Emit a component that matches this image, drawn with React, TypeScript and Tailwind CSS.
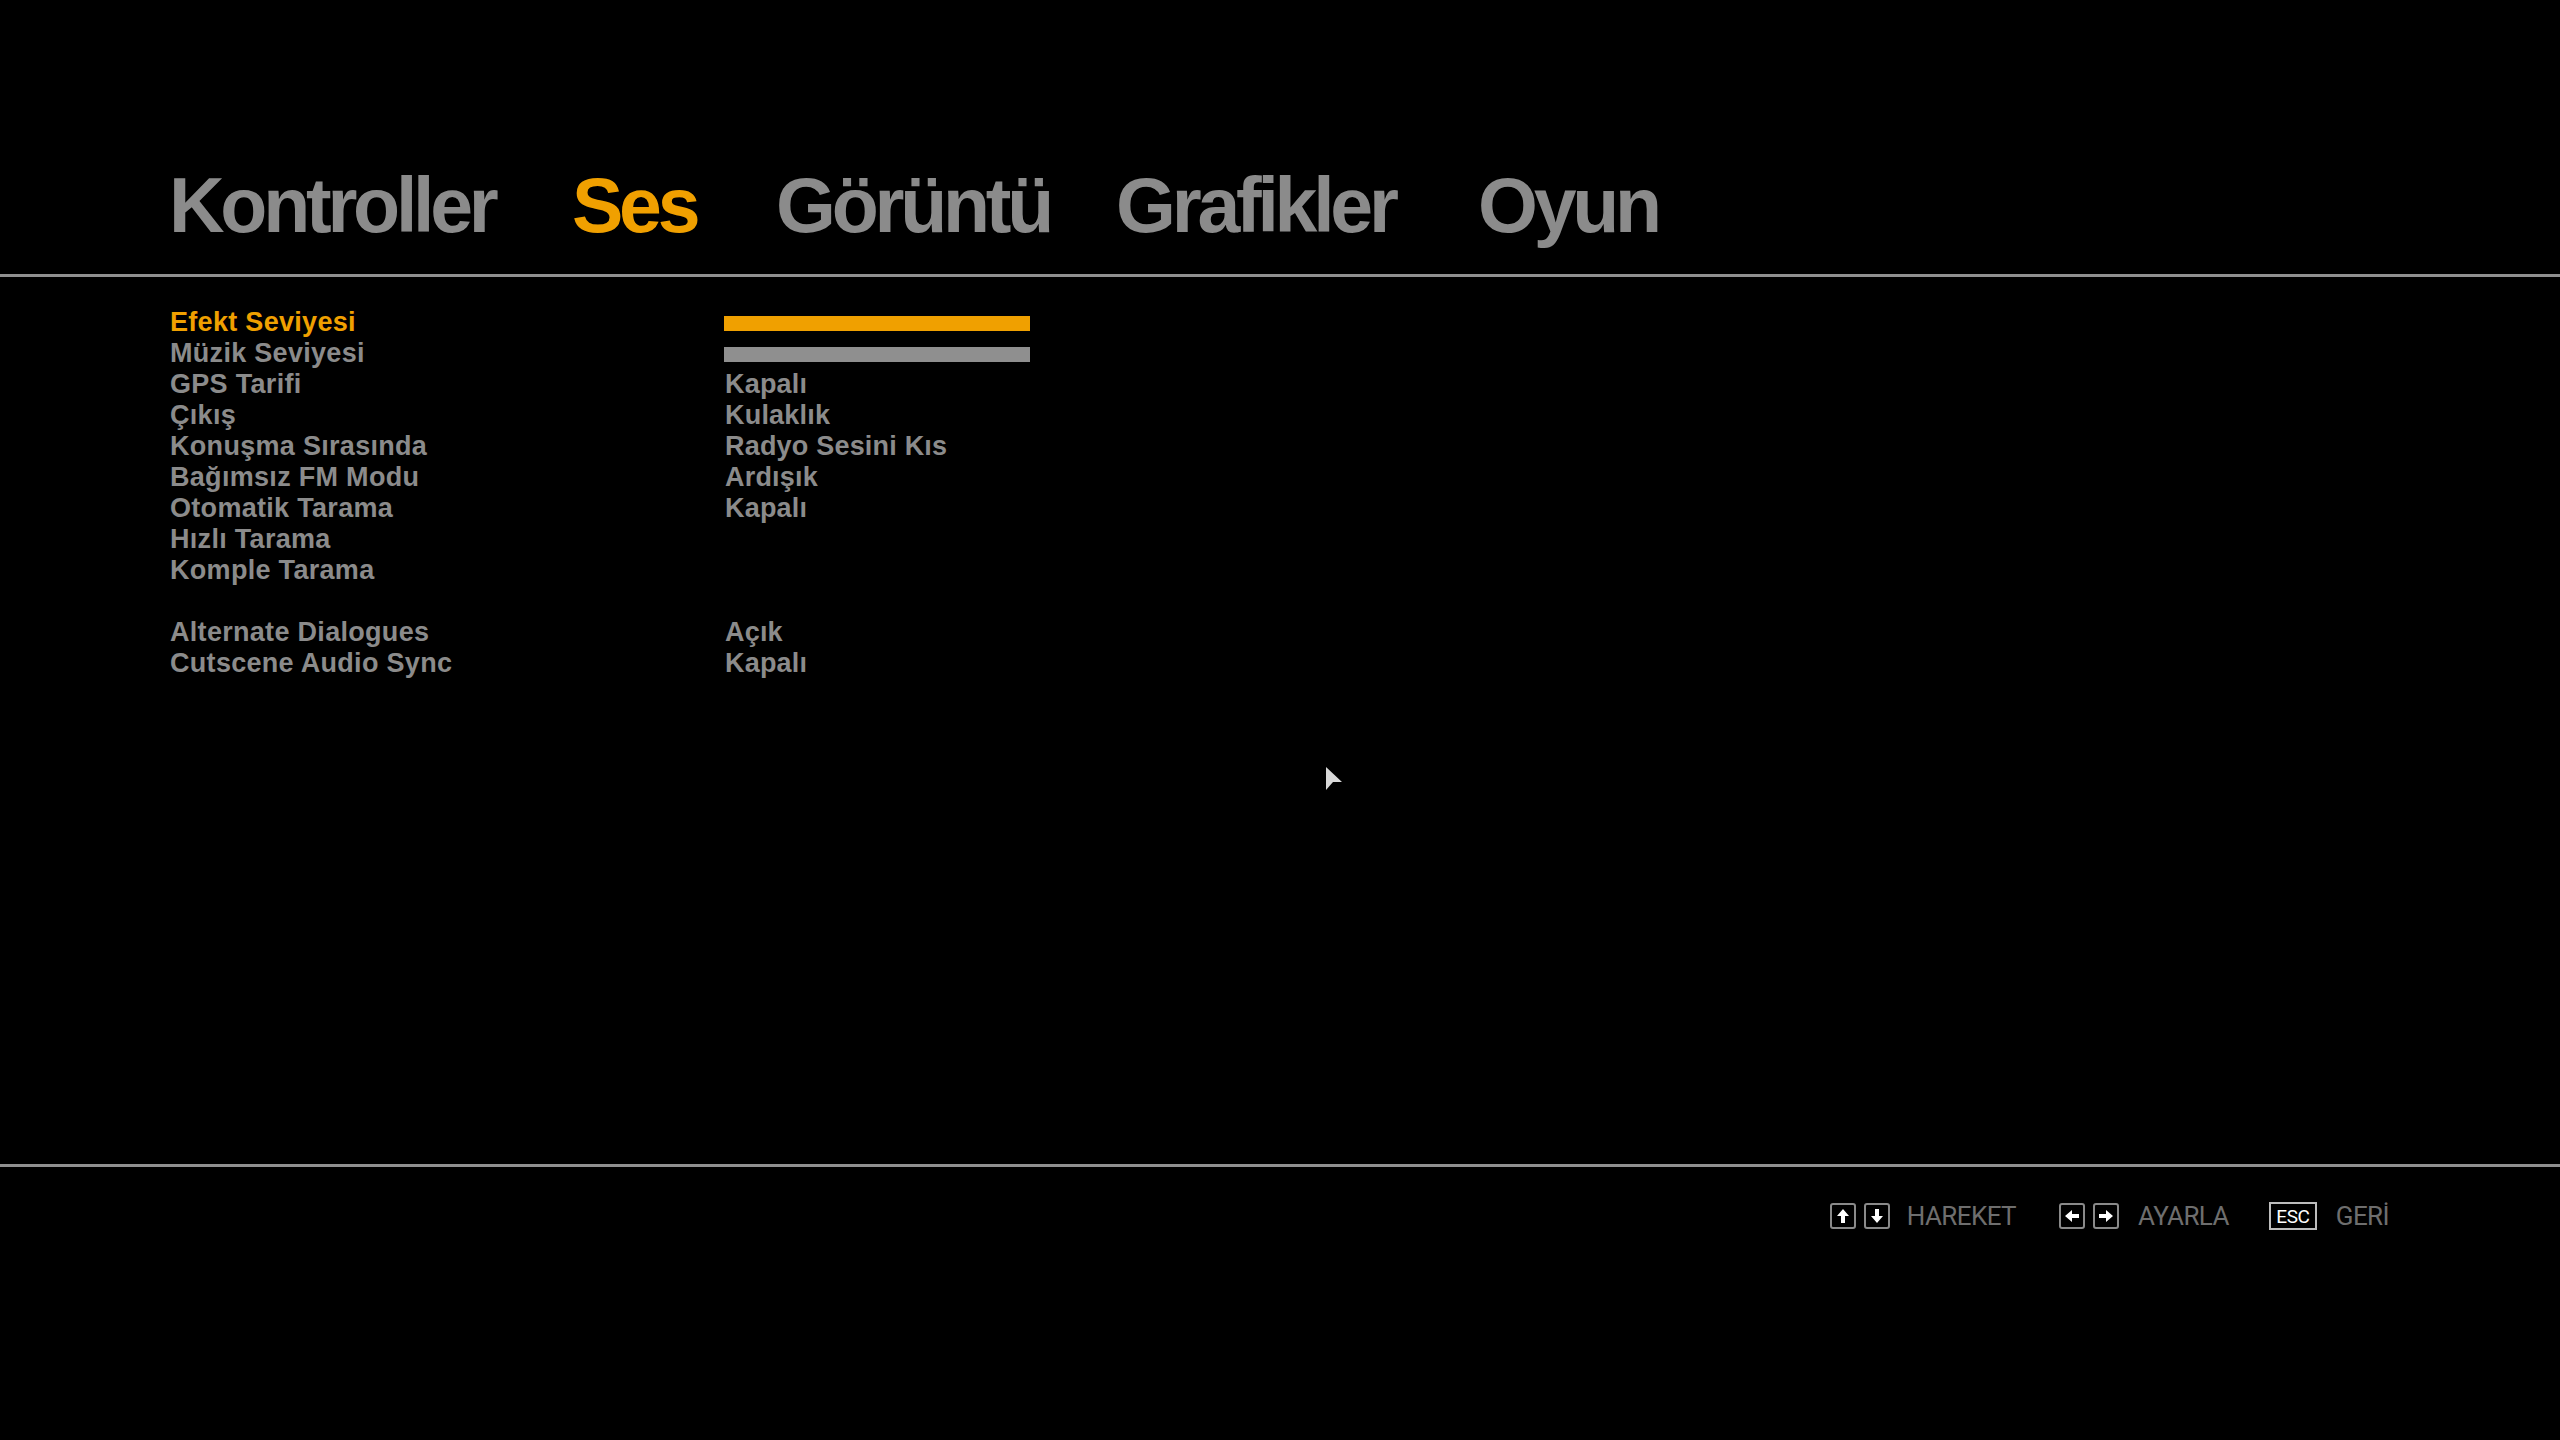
import React from "react";

type Row = { label: string; value?: string; bar?: "active" | "idle"; active?: boolean };

const rows: (Row | null)[] = [
  { label: "Efekt Seviyesi", bar: "active", active: true },
  { label: "Müzik Seviyesi", bar: "idle" },
  { label: "GPS Tarifi", value: "Kapalı" },
  { label: "Çıkış", value: "Kulaklık" },
  { label: "Konuşma Sırasında", value: "Radyo Sesini Kıs" },
  { label: "Bağımsız FM Modu", value: "Ardışık" },
  { label: "Otomatik Tarama", value: "Kapalı" },
  { label: "Hızlı Tarama" },
  { label: "Komple Tarama" },
  null,
  { label: "Alternate Dialogues", value: "Açık" },
  { label: "Cutscene Audio Sync", value: "Kapalı" },
];

const tabs = [
  { name: "Kontroller", w: "w-[403px]" },
  { name: "Ses", w: "w-[204px]", active: true },
  { name: "Görüntü", w: "w-[340px]" },
  { name: "Grafikler", w: "w-[362px]" },
  { name: "Oyun", w: "w-auto" },
];

function Arrow({ dir }: { dir: "up" | "down" | "left" | "right" }) {
  const rot =
    dir === "up" ? "rotate-0" : dir === "down" ? "rotate-180" : dir === "left" ? "-rotate-90" : "rotate-90";
  return (
    <div className="w-[26px] h-[26px] rounded-[3px] border-2 border-[#8a8a8a] flex items-center justify-center">
      <svg width="12" height="14" viewBox="0 0 12 14" className={rot}>
        <polygon points="6,0 12,7 8,7 8,14 4,14 4,7 0,7" fill="#ffffff" />
      </svg>
    </div>
  );
}

function Hint({ children, label, gap }: { children: React.ReactNode; label: string; gap: string }) {
  return (
    <div className={`flex items-center ${gap}`}>
      {children}
      <span className="text-[26px] leading-none tracking-[-0.6px] text-[#6e6e6e] font-['Roboto',sans-serif]">
        {label}
      </span>
    </div>
  );
}

export default function App() {
  return (
    <div className="relative w-[2560px] h-[1440px] bg-black overflow-hidden flex flex-col font-['Liberation_Sans',Arial,sans-serif]">
      {/* tab strip */}
      <div className="pt-[167px] pl-[169px] mb-[30px] flex">
        {tabs.map((t) => (
          <div
            key={t.name}
            className={`${t.w} shrink-0 text-[77px] leading-[77px] font-bold tracking-[-0.055em] ${
              t.active ? "text-[#f0a000]" : "text-[#8b8b8b]"
            }`}
          >
            {t.name}
          </div>
        ))}
      </div>
      <div className="h-[3px] bg-[#8f8f8f]" />

      {/* settings list */}
      <div className="h-[887px] pt-[30px] pl-[170px]">
        <div className="grid grid-cols-[555px_306px]">
          {rows.map((r, i) =>
            r === null ? (
              <React.Fragment key={i}>
                <div className="h-[31px]" />
                <div className="h-[31px]" />
              </React.Fragment>
            ) : (
              <React.Fragment key={i}>
                <div
                  className={`h-[31px] text-[27px] leading-[31px] font-bold tracking-[0.3px] whitespace-nowrap ${
                    r.active ? "text-[#f0a000]" : "text-[#8b8b8b]"
                  }`}
                >
                  {r.label}
                </div>
                <div className="h-[31px] flex items-center">
                  {r.bar ? (
                    <div
                      className={`w-[306px] h-[15px] mt-[2px] -ml-[1px] ${
                        r.bar === "active" ? "bg-[#f0a000]" : "bg-[#8f8f8f]"
                      }`}
                    />
                  ) : (
                    <span className="text-[27px] leading-[31px] font-bold tracking-[0.2px] text-[#8b8b8b] whitespace-nowrap">
                      {r.value ?? ""}
                    </span>
                  )}
                </div>
              </React.Fragment>
            )
          )}
        </div>
      </div>
      <div className="h-[3px] bg-[#8f8f8f]" />

      {/* control hints */}
      <div className="pt-[35px] pr-[171px] flex justify-end items-center">
        <Hint label="HAREKET" gap="gap-[17px]">
          <div className="flex gap-[8px]">
            <Arrow dir="up" />
            <Arrow dir="down" />
          </div>
        </Hint>
        <div className="w-[43px]" />
        <Hint label="AYARLA" gap="gap-[19px]">
          <div className="flex gap-[8px]">
            <Arrow dir="left" />
            <Arrow dir="right" />
          </div>
        </Hint>
        <div className="w-[40px]" />
        <Hint label="GERİ" gap="gap-[19px]">
          <div className="w-[48px] h-[28px] border-2 border-[#bdbdbd] flex items-center justify-center text-white text-[19px] leading-none tracking-[-0.5px] font-['Roboto',sans-serif]">
            ESC
          </div>
        </Hint>
      </div>

      {/* mouse pointer */}
      <svg className="absolute left-[1326px] top-[767px]" width="18" height="24" viewBox="0 0 18 24">
        <polygon points="0,0 16,15 7,15 0,23" fill="#d9d9d9" />
      </svg>
    </div>
  );
}
